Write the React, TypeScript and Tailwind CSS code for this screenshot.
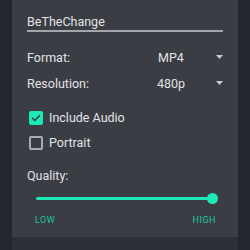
import React, { useState } from 'react';

function Check({ checked }: { checked: boolean }) {
  return checked ? (
    <span className="flex h-[14px] w-[14px] items-center justify-center rounded-[2px] bg-[#1de9b6]">
      <svg width="12" height="12" viewBox="0 0 24 24" fill="none">
        <path d="M5 12.5l4.5 4.5L19 7.5" stroke="#37393f" strokeWidth="3" strokeLinecap="square" />
      </svg>
    </span>
  ) : (
    <span className="h-[14px] w-[14px] rounded-[2px] border-2 border-[#a9abb0]" />
  );
}

function Caret() {
  return (
    <svg width="7" height="4" viewBox="0 0 7 4">
      <path d="M0 0h7L3.5 4z" fill="#c9cbcf" />
    </svg>
  );
}

export default function App() {
  const [audio, setAudio] = useState(true);
  const [portrait, setPortrait] = useState(false);

  return (
    <div
      className="flex h-[250px] w-[250px] flex-col bg-[#25272e] text-[#e2e3e5]"
      style={{ fontFamily: 'Roboto, "Liberation Sans", sans-serif' }}
    >
      <div className="mx-[12px] flex h-[237px] flex-col bg-[#3a3d44] px-[15px]">
        <div className="mt-[15px] border-b-2 border-[#a3a5aa] pb-[1px] text-[12.5px] leading-[14px]">
          BeTheChange
        </div>

        <div className="mt-[18px] flex h-[16px] items-center text-[12.5px] leading-[16px]">
          <span className="w-[131px]">Format:</span>
          <span className="flex-1">MP4</span>
          <span className="mb-[3px] flex"><Caret /></span>
        </div>
        <div className="mt-[10px] flex h-[16px] items-center text-[12.5px] leading-[16px]">
          <span className="w-[130px]">Resolution:</span>
          <span className="flex-1">480p</span>
          <span className="mb-[2px] flex"><Caret /></span>
        </div>

        <button
          className="mt-[19px] ml-[2px] flex h-[14px] items-center gap-[6px] text-[12.5px] leading-[14px]"
          onClick={() => setAudio(!audio)}
        >
          <Check checked={audio} />
          <span>Include Audio</span>
        </button>
        <button
          className="mt-[11px] ml-[2px] flex h-[14px] items-center gap-[6px] text-[12.5px] leading-[14px]"
          onClick={() => setPortrait(!portrait)}
        >
          <Check checked={portrait} />
          <span>Portrait</span>
        </button>

        <div className="mt-[18px] h-[16px] text-[12.5px] leading-[16px]">Quality:</div>

        <div className="mt-[9px] ml-[9px] mr-[5px] flex h-[11px] items-center">
          <div className="h-[3px] flex-1 rounded-full bg-[#1de9b6]" />
          <div className="ml-[-5px] h-[11px] w-[11px] rounded-full bg-[#1de9b6]" />
        </div>

        <div className="mt-[11px] flex h-[10px] justify-between pl-[8px] pr-[7px] text-[9px] leading-[10px] tracking-[0.5px] text-[#1cc79b]">
          <span>LOW</span>
          <span>HIGH</span>
        </div>
      </div>
      <div className="mx-[12px] flex-1 bg-[#2e3038]" />
    </div>
  );
}
